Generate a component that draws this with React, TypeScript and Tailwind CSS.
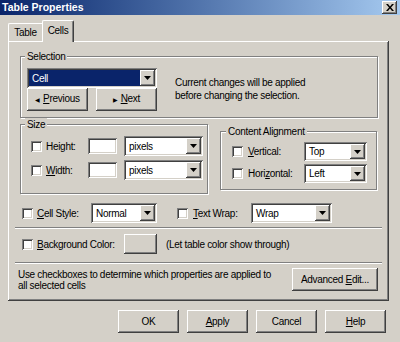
import React from "react";

const raised =
  "bg-[#d4d0c8] shadow-[inset_-1px_-1px_#404040,inset_1px_1px_#ffffff,inset_-2px_-2px_#808080]";
const sunken =
  "shadow-[inset_1px_1px_#808080,inset_-1px_-1px_#ffffff,inset_2px_2px_#404040,inset_-2px_-2px_#d4d0c8]";

function U({ children }: { children: React.ReactNode }) {
  return <span className="underline underline-offset-[1px]">{children}</span>;
}

function Button({
  w,
  h = 23,
  children,
}: {
  w: string;
  h?: number;
  children: React.ReactNode;
}) {
  return (
    <div
      className={`${raised} ${w} flex shrink-0 items-center justify-center`}
      style={{ height: h }}
    >
      <span className="whitespace-pre">{children}</span>
    </div>
  );
}

function Arrow() {
  return (
    <svg width="7" height="4" viewBox="0 0 7 4">
      <path d="M0 0h7L3.5 4z" fill="#000" />
    </svg>
  );
}

function Select({
  w,
  h = 20,
  value,
  selected,
}: {
  w: string;
  h?: number;
  value: string;
  selected?: boolean;
}) {
  return (
    <div
      className={`${sunken} ${w} flex shrink-0 bg-white p-[2px]`}
      style={{ height: h }}
    >
      <div
        className={`flex flex-1 items-center pl-[3px] ${
          selected ? "bg-[#0a246a] text-white" : ""
        }`}
      >
        {value}
      </div>
      <div className={`${raised} flex w-[15px] items-center justify-center`}>
        <Arrow />
      </div>
    </div>
  );
}

function Check() {
  return <div className={`${sunken} h-[11px] w-[11px] shrink-0 bg-white`} />;
}

function Input({ w }: { w: string }) {
  return <div className={`${sunken} ${w} h-[16px] shrink-0 bg-white`} />;
}

function Group({
  title,
  className,
  legendMl,
  children,
}: {
  title: string;
  className: string;
  legendMl: string;
  children: React.ReactNode;
}) {
  return (
    <div
      className={`flex shrink-0 flex-col border border-[#808080] shadow-[inset_1px_1px_#ffffff,1px_1px_#ffffff] ${className}`}
    >
      <span className={`-mt-[7px] ${legendMl} w-fit bg-[#d4d0c8] px-[2px] leading-[13px]`}>
        {title}
      </span>
      {children}
    </div>
  );
}

function Separator({ className }: { className: string }) {
  return (
    <div
      className={`h-[2px] shrink-0 border-t border-b border-t-[#808080] border-b-white ${className}`}
    />
  );
}

export default function App() {
  return (
    <div className="h-[342px] w-[400px] overflow-hidden bg-[#d4d0c8] font-['Liberation_Sans',Arial,sans-serif] text-[10px] leading-[13px] tracking-[-0.3px] text-black">
      {/* title bar */}
      <div className="flex h-[15px] items-center justify-between bg-linear-to-r from-[#0a246a] to-[#a6caf0] pl-[2px] pr-[3px]">
        <span className="text-[10.5px] font-bold tracking-normal text-white">Table Properties</span>
        <div className={`${raised} flex h-[13px] w-[15px] items-center justify-center`}>
          <svg width="8" height="7" viewBox="0 0 8 7">
            <path d="M0 0h2l2 2.5L6 0h2L5 3.5 8 7H6L4 4.5 2 7H0l3-3.5z" fill="#000" />
          </svg>
        </div>
      </div>

      {/* tabs */}
      <div className="flex h-[26px] items-end pl-[8px]">
        <div className="flex h-[18px] w-[34px] items-center justify-center rounded-tl-[2px] border-t border-l border-white">
          Table
        </div>
        <div className="relative -mb-px flex h-[22px] w-[32px] items-center justify-center rounded-t-[2px] border-t border-l border-r border-t-white border-l-white border-r-[#404040] bg-[#d4d0c8] pb-[2px] shadow-[inset_-1px_0_#808080]">
          Cells
        </div>
      </div>

      {/* tab panel */}
      <div className={`${raised} ml-[8px] flex h-[260px] w-[381px] flex-col pl-[12px] pt-[15px]`}>
        <Group title="Selection" className="h-[62px] w-[358px]" legendMl="ml-[4px]">
          <div className="mt-[5px] flex">
            <div className="ml-[6px] flex w-[130px] flex-col">
              <Select w="w-[130px]" value="Cell" selected />
              <div className="flex justify-between">
                <Button w="w-[61px]">
                  <span className="mr-[3px] text-[6px]">◀</span>
                  <U>P</U>revious
                </Button>
                <Button w="w-[61px]">
                  <span className="mr-[3px] text-[6px]">▶</span>
                  <U>N</U>ext
                </Button>
              </div>
            </div>
            <div className="ml-[18px] mt-[8px]">
              Current changes will be applied
              <br />
              before changing the selection.
            </div>
          </div>
        </Group>

        <div className="mt-[6px] flex items-start">
          <Group title="Size" className="h-[70px] w-[188px]" legendMl="ml-[4px]">
            <div className="mt-[5px] flex items-center pl-[10px]">
              <Check />
              <span className="ml-[4px] w-[42px]">
                Hei<U>g</U>ht:
              </span>
              <Input w="w-[29px]" />
              <Select w="w-[79px] ml-[7px]" value="pixels" />
            </div>
            <div className="mt-[4px] flex items-center pl-[10px]">
              <Check />
              <span className="ml-[4px] w-[42px]">
                <U>W</U>idth:
              </span>
              <Input w="w-[29px]" />
              <Select w="w-[79px] ml-[7px]" value="pixels" />
            </div>
          </Group>
          <Group title="Content Alignment" className="ml-[12px] mt-[7px] h-[59px] w-[157px]" legendMl="ml-[5px]">
            <div className="mt-[4px] flex items-center pl-[11px]">
              <Check />
              <span className="ml-[5px] w-[56px]">
                <U>V</U>ertical:
              </span>
              <Select w="w-[63px]" h={19} value="Top" />
            </div>
            <div className="mt-[3px] flex items-center pl-[11px]">
              <Check />
              <span className="ml-[5px] w-[56px]">
                Hori<U>z</U>ontal:
              </span>
              <Select w="w-[63px]" h={19} value="Left" />
            </div>
          </Group>
        </div>

        <div className="mt-[9px] flex items-center pl-[2px]">
          <Check />
          <span className="ml-[4px] w-[54px]">
            <U>C</U>ell Style:
          </span>
          <Select w="w-[66px]" value="Normal" />
          <div className="ml-[20px]">
            <Check />
          </div>
          <span className="ml-[5px] w-[58px]">
            <U>T</U>ext Wrap:
          </span>
          <Select w="w-[81px]" value="Wrap" />
        </div>

        <Separator className="-ml-[5px] mt-[4px] w-[367px]" />

        <div className="mt-[5px] flex items-center pl-[2px]">
          <Check />
          <span className="ml-[4px] w-[87px]">
            <U>B</U>ackground Color:
          </span>
          <Button w="w-[33px]" h={20}>
            {""}
          </Button>
          <span className="ml-[9px]">(Let table color show through)</span>
        </div>

        <Separator className="-ml-[5px] mt-[8px] w-[367px]" />

        <div className="-ml-[2px] mt-[4px] flex w-[360px] items-start justify-between">
          <div className="mt-[1px] leading-[11px]">
            Use checkboxes to determine which properties are applied to
            <br />
            all selected cells
          </div>
          <Button w="w-[86px]">
            Advanced <U>E</U>dit...
          </Button>
        </div>
      </div>

      {/* dialog buttons */}
      <div className="mt-[9px] flex justify-end gap-[8px] pr-[14px]">
        <Button w="w-[61px]">OK</Button>
        <Button w="w-[61px]">
          <U>A</U>pply
        </Button>
        <Button w="w-[61px]">Cancel</Button>
        <Button w="w-[61px]">
          <U>H</U>elp
        </Button>
      </div>
    </div>
  );
}
